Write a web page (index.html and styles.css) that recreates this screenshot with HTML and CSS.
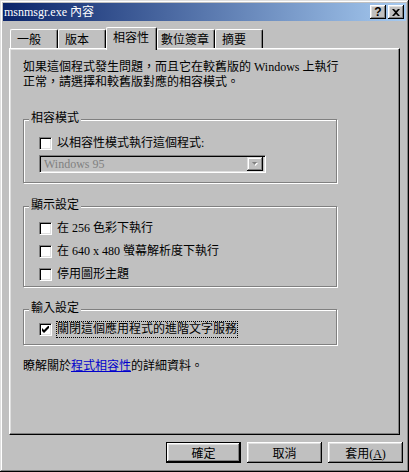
FILE: index.html
```html
<!DOCTYPE html>
<html lang="zh-Hant">
<head>
    <meta charset="UTF-8">
    <title>msnmsgr.exe 內容</title>
    <link rel="stylesheet" href="styles.css">
</head>
<body>
    <div class="window">
        <div class="titlebar">
            <span class="title">msnmsgr.exe 內容</span>
            <div class="caption-btns">
                <span class="cap-btn help">?</span>
                <span class="cap-btn close">
                    <svg width="8" height="7" viewBox="0 0 8 7">
                        <path d="M0 0h2l2 2 2-2h2L5 3.5 8 7H6L4 5 2 7H0l3-3.5z" fill="#000"/>
                    </svg>
                </span>
            </div>
        </div>

        <div class="tabs">
            <div class="tab tab-general">一般</div>
            <div class="tab tab-version">版本</div>
            <div class="tab tab-compat selected">相容性</div>
            <div class="tab tab-sign">數位簽章</div>
            <div class="tab tab-summary">摘要</div>
        </div>

        <div class="panel">
            <p class="intro">如果這個程式發生問題，而且它在較舊版的 Windows 上執行<br>正常，請選擇和較舊版對應的相容模式。</p>

            <div class="group group-compat">
                <span class="legend">相容模式</span>
                <div class="check"><span class="box"></span><span>以相容性模式執行這個程式:</span></div>
                <div class="combo">
                    <span class="combo-text">Windows 95</span>
                    <span class="combo-btn">
                        <svg width="7" height="5" viewBox="0 0 7 5">
                            <path d="M1 1h5l-2.5 3z" fill="#fff"/>
                            <path d="M0 0h5L2.5 3z" fill="#808080"/>
                        </svg>
                    </span>
                </div>
            </div>

            <div class="group group-display">
                <span class="legend">顯示設定</span>
                <div class="check"><span class="box"></span><span>在 256 色彩下執行</span></div>
                <div class="check"><span class="box"></span><span>在 640 x 480 螢幕解析度下執行</span></div>
                <div class="check"><span class="box"></span><span>停用圖形主題</span></div>
            </div>

            <div class="group group-input">
                <span class="legend">輸入設定</span>
                <div class="check">
                    <span class="box checked">
                        <svg width="7" height="7" viewBox="0 0 7 7">
                            <path d="M0 2v3l2 2 5-5V-1L2 4z" fill="#000"/>
                        </svg>
                    </span>
                    <span class="focused">關閉這個應用程式的進階文字服務</span>
                </div>
            </div>

            <p class="more">瞭解關於<a href="#">程式相容性</a>的詳細資料。</p>
        </div>

        <div class="buttons">
            <button class="btn default">確定</button>
            <button class="btn">取消</button>
            <button class="btn">套用(<u>A</u>)</button>
        </div>
    </div>
</body>
</html>
```

FILE: styles.css
```css
body {
    margin: 0;
    font-family: "Liberation Serif", "Noto Sans CJK TC", serif;
    font-size: 12px;
    color: #000;
}

.window {
    box-sizing: border-box;
    width: 409px;
    height: 472px;
    padding: 3px;
    background-color: #c0c0c0;
    box-shadow: inset -1px -1px #000, inset 1px 1px #dfdfdf,
                inset -2px -2px #808080, inset 2px 2px #fff;
}

/* title bar */
.titlebar {
    display: flex;
    align-items: center;
    justify-content: space-between;
    height: 18px;
    padding: 0 2px 0 1px;
    background: linear-gradient(to right, #0a246a, #a6caf0);
}

.title {
    color: #fff;
    line-height: 18px;
}

.caption-btns {
    display: flex;
    gap: 2px;
}

.cap-btn {
    display: flex;
    align-items: center;
    justify-content: center;
    box-sizing: border-box;
    width: 16px;
    height: 14px;
    background-color: #c0c0c0;
    box-shadow: inset -1px -1px #000, inset 1px 1px #fff,
                inset -2px -2px #808080, inset 2px 2px #dfdfdf;
}

.help {
    font-family: "Liberation Sans", sans-serif;
    font-weight: bold;
    font-size: 12px;
    line-height: 14px;
}

/* tabs */
.tabs {
    display: flex;
    align-items: flex-start;
    height: 21px;
    margin: 6px 0 0 7px;
}

.tab {
    box-sizing: border-box;
    height: 19px;
    margin-top: 2px;
    padding: 3px 0 0 6px;
    line-height: 15px;
    font-size: 12px;
    border-top: 1px solid #fff;
    border-left: 1px solid #fff;
    border-right: 1px solid #000;
    border-radius: 2px 2px 0 0;
    box-shadow: inset -1px 0 #808080;
    white-space: nowrap;
}

.tab-general { width: 48px; }
.tab-version { width: 48px; }
.tab-compat { width: 51px; }
.tab-sign { width: 58px; padding-left: 3px; }
.tab-summary { width: 48px; }

.tab.selected {
    position: relative;
    z-index: 1;
    height: 23px;
    margin-top: 0;
    padding-top: 3px;
    background-color: #c0c0c0;
}

/* property sheet */
.panel {
    box-sizing: border-box;
    width: 391px;
    height: 387px;
    margin-left: 6px;
    padding: 11px 13px 0;
    border: 1px solid;
    border-color: #fff #000 #000 #fff;
    box-shadow: inset -1px -1px #808080, inset 1px 1px #dfdfdf;
}

.intro {
    margin: 0;
    line-height: 15px;
}

.group {
    position: relative;
    box-sizing: border-box;
    width: 314px;
    border: 1px solid #808080;
    box-shadow: 1px 1px 0 #fff, inset 1px 1px 0 #fff;
    padding-left: 15px;
}

.legend {
    position: absolute;
    top: -8px;
    left: 5px;
    padding: 0 2px;
    line-height: 13px;
    background-color: #c0c0c0;
}

.group-compat {
    height: 64px;
    margin-top: 29px;
    padding-top: 17px;
}

.group-display {
    height: 81px;
    margin-top: 23px;
    padding-top: 15px;
    display: flex;
    flex-direction: column;
    gap: 10px;
}

.group-input {
    height: 36px;
    margin-top: 22px;
    padding-top: 13px;
}

.check {
    display: flex;
    align-items: center;
    gap: 5px;
    height: 13px;
    line-height: 13px;
    white-space: nowrap;
}

.box {
    display: flex;
    align-items: center;
    justify-content: center;
    box-sizing: border-box;
    width: 13px;
    height: 13px;
    flex: none;
    background-color: #fff;
    border: 1px solid;
    border-color: #808080 #fff #fff #808080;
    box-shadow: inset 1px 1px #000, inset -1px -1px #dfdfdf;
}

.focused {
    margin-left: -1px;
    padding: 2px 1px;
    outline: 1px dotted #000;
    outline-offset: -1px;
}

.combo {
    display: flex;
    align-items: center;
    justify-content: space-between;
    box-sizing: border-box;
    width: 227px;
    height: 18px;
    margin-top: 5px;
    padding: 2px;
    border: 1px solid;
    border-color: #808080 #fff #fff #808080;
    box-shadow: inset 1px 1px #000, inset -1px -1px #dfdfdf;
}

.combo-text {
    padding-left: 2px;
    color: #808080;
    line-height: 14px;
}

.combo-btn {
    display: flex;
    align-items: center;
    justify-content: center;
    box-sizing: border-box;
    width: 16px;
    height: 14px;
    box-shadow: inset -1px -1px #000, inset 1px 1px #dfdfdf,
                inset -2px -2px #808080, inset 2px 2px #fff;
}

.more {
    margin: 14px 0 0;
    line-height: 15px;
}

.more a {
    color: #0000cc;
}

/* dialog buttons */
.buttons {
    display: flex;
    justify-content: flex-end;
    gap: 6px;
    margin-top: 7px;
    padding-right: 3px;
}

.btn {
    box-sizing: border-box;
    width: 75px;
    height: 21px;
    padding: 0;
    font-family: inherit;
    font-size: 12px;
    color: #000;
    background-color: #c0c0c0;
    border: none;
    box-shadow: inset -1px -1px #000, inset 1px 1px #fff,
                inset -2px -2px #808080, inset 2px 2px #dfdfdf;
}

.btn.default {
    border: 1px solid #000;
}
```
